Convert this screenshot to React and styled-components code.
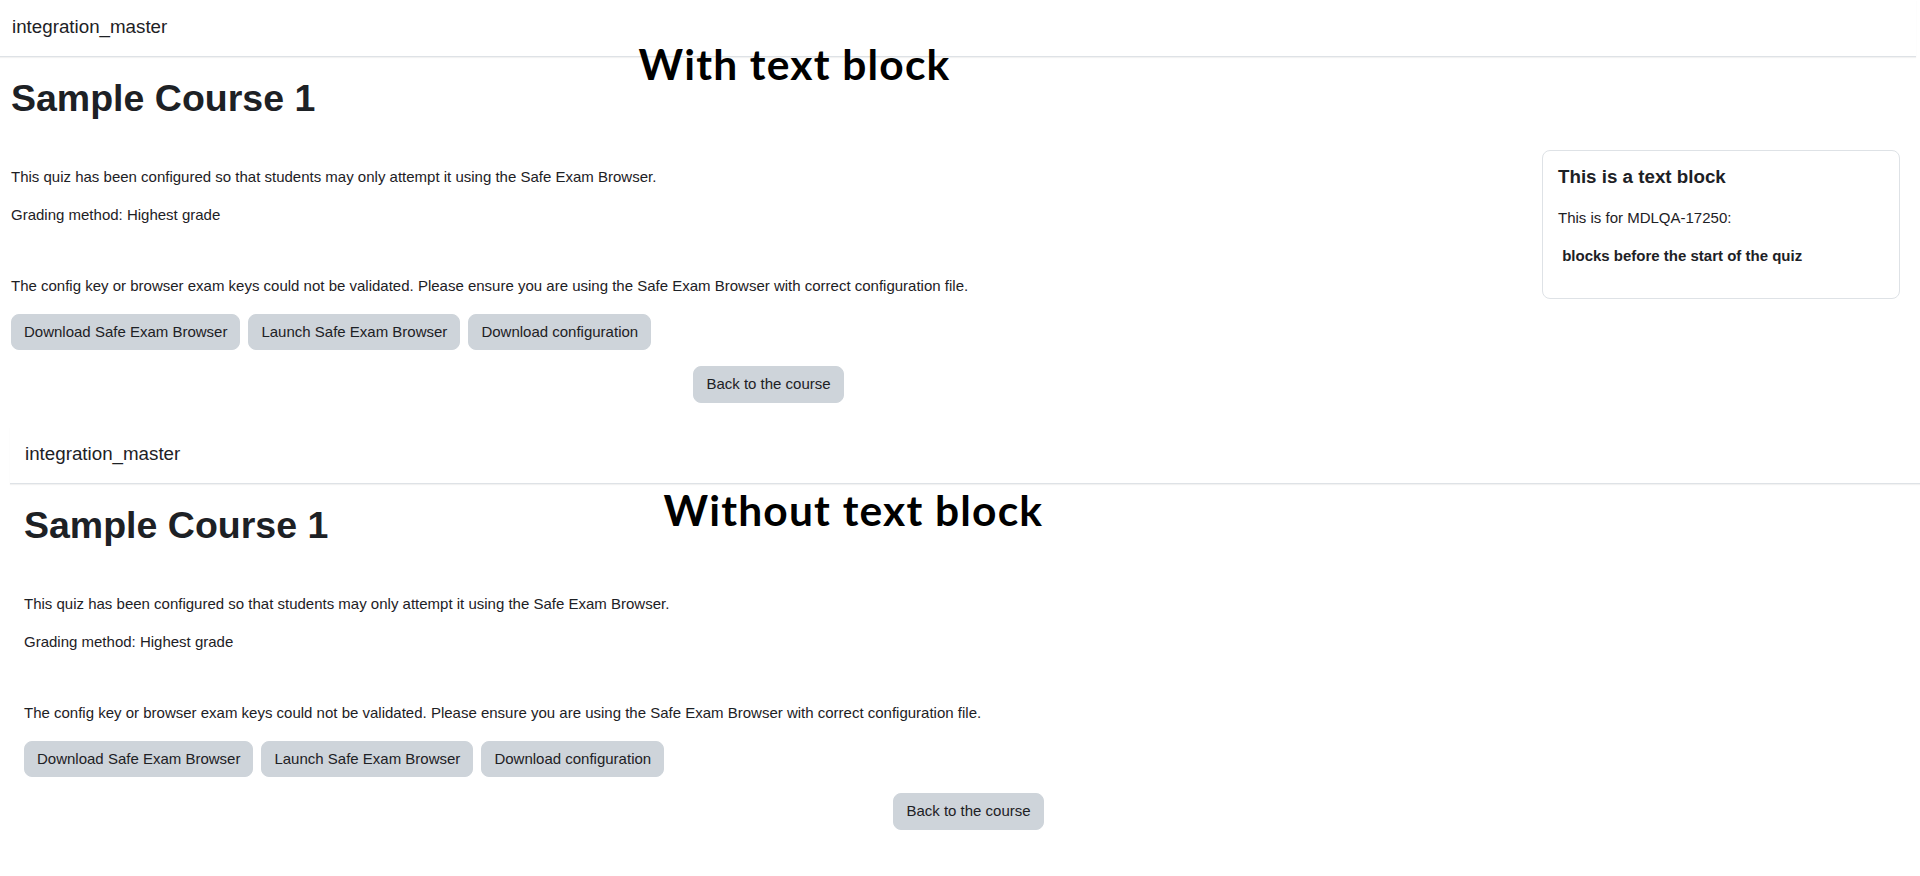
import React from 'react';
import styled, {createGlobalStyle} from 'styled-components';

const GlobalStyle = createGlobalStyle`
  html, body {
    margin: 0;
    padding: 0;
    background: #fff;
  }
  body {
    font-family: "Liberation Sans", Arial, sans-serif;
    font-size: 15px;
    line-height: 1.5;
    color: #1d2125;
  }
`;

const Page = styled.div`
  width: 1920px;
  height: 876px;
  overflow: hidden;
  background: #fff;
`;

const Shot = styled.section`
  position: relative;
  margin-left: ${({offset}) => offset}px;
  width: ${({width}) => width}px;
  padding-bottom: 24.25px;
`;

const NavBar = styled.header`
  box-sizing: border-box;
  height: 57px;
  padding: 12.5px 0 0 ${({inset}) => inset}px;
  border-bottom: 1px solid #dee2e6;
  box-shadow: 0 1px 1px rgba(0, 0, 0, 0.05);
`;

const Brand = styled.span`
  font-size: 18.75px;
  line-height: 1.5;
  color: #1d2125;
`;

// annotation written over the screenshot
const Caption = styled.div`
  position: absolute;
  left: ${({left}) => left}px;
  top: ${({top}) => top}px;
  font-family: Lato, "Open Sans", sans-serif;
  font-weight: 700;
  font-size: 42.5px;
  letter-spacing: 1.2px;
  line-height: 1;
  color: #000;
  white-space: nowrap;
`;

const PageTitle = styled.h1`
  margin: 18.5px 0 0;
  padding-left: ${({inset}) => inset}px;
  font-size: 37.5px;
  line-height: 1.2;
  font-weight: 700;
`;

const Columns = styled.div`
  display: flex;
  gap: 16px;
  margin-top: 29.5px;
  padding: 0 ${({right}) => right}px 0 ${({inset}) => inset}px;
`;

const Main = styled.div`
  flex: 1;
  padding-top: 15.75px;
`;

const Para = styled.p`
  margin: 0 0 ${({gap}) => gap || 16}px;
`;

const ButtonRow = styled.div`
  display: flex;
  gap: 8px;
  margin-bottom: 16px;
`;

const Button = styled.button`
  font-family: "Liberation Sans", Arial, sans-serif;
  font-size: 15px;
  line-height: 1.5;
  color: #1d2125;
  background: #ced4da;
  border: 1px solid #ced4da;
  border-radius: 8px;
  padding: 6px 12px;
  cursor: pointer;
`;

const Centered = styled.div`
  display: flex;
  justify-content: center;
`;

const Aside = styled.aside`
  width: 358px;
  flex-shrink: 0;
`;

const Card = styled.div`
  border: 1px solid #dee2e6;
  border-radius: 8px;
  padding: 15px 16px 16px 15px;
`;

const CardTitle = styled.h5`
  margin: 0 0 18.5px;
  font-size: 18.75px;
  line-height: 1.2;
  font-weight: 700;
`;

const CardText = styled.p`
  margin: 0 0 15px;
  font-weight: ${({bold}) => bold ? 700 : 400};
`;

const QuizPage = ({offset, width, inset, brandInset, right, label, labelLeft, labelTop, withBlock}) => (
    <Shot offset={offset} width={width}>
        <NavBar inset={brandInset}>
            <Brand>integration_master</Brand>
        </NavBar>
        <PageTitle inset={inset}>Sample Course 1</PageTitle>
        <Columns inset={inset} right={right}>
            <Main>
                <Para>This quiz has been configured so that students may only attempt it using the Safe Exam Browser.</Para>
                <Para gap={48.5}>Grading method: Highest grade</Para>
                <Para>The config key or browser exam keys could not be validated. Please ensure you are using the Safe Exam Browser with correct configuration file.</Para>
                <ButtonRow>
                    <Button>Download Safe Exam Browser</Button>
                    <Button>Launch Safe Exam Browser</Button>
                    <Button>Download configuration</Button>
                </ButtonRow>
                <Centered>
                    <Button>Back to the course</Button>
                </Centered>
            </Main>
            {withBlock && (
                <Aside>
                    <Card>
                        <CardTitle>This is a text block</CardTitle>
                        <CardText>This is for MDLQA-17250:</CardText>
                        <CardText bold>&nbsp;blocks before the start of the quiz</CardText>
                    </Card>
                </Aside>
            )}
        </Columns>
        <Caption left={labelLeft} top={labelTop}>{label}</Caption>
    </Shot>
);

export default function App() {
    return (
        <Page>
            <GlobalStyle/>
            <QuizPage offset={0} width={1916} inset={11} brandInset={12} right={16}
                      label="With text block" labelLeft={638.5} labelTop={43} withBlock/>
            <QuizPage offset={10} width={1910} inset={14} brandInset={15} right={7}
                      label="Without text block" labelLeft={653.5} labelTop={61.5}/>
        </Page>
    );
}
